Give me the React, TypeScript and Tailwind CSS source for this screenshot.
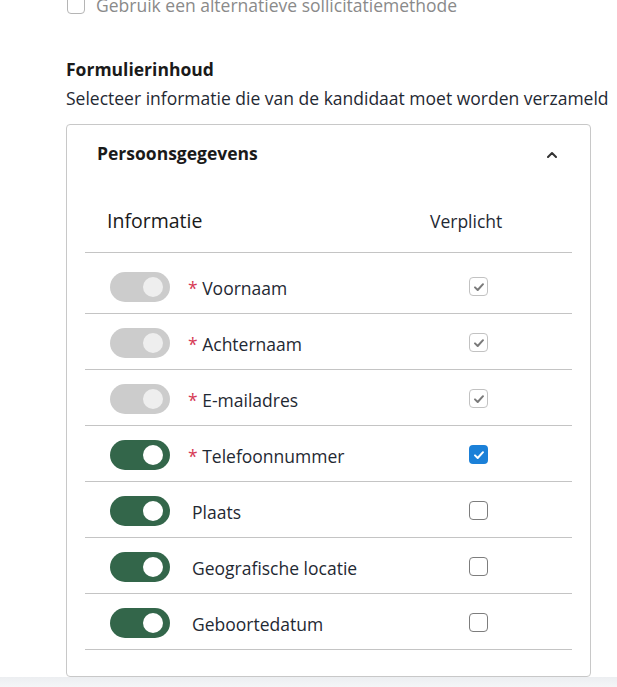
import { useState } from 'react';

type Field = {
  label: string;
  required: boolean;
  locked: boolean;
  enabled: boolean;
  mandatory: boolean;
};

const FIELDS: Field[] = [
  { label: 'Voornaam', required: true, locked: true, enabled: true, mandatory: true },
  { label: 'Achternaam', required: true, locked: true, enabled: true, mandatory: true },
  { label: 'E-mailadres', required: true, locked: true, enabled: true, mandatory: true },
  { label: 'Telefoonnummer', required: true, locked: false, enabled: true, mandatory: true },
  { label: 'Plaats', required: false, locked: false, enabled: true, mandatory: false },
  { label: 'Geografische locatie', required: false, locked: false, enabled: true, mandatory: false },
  { label: 'Geboortedatum', required: false, locked: false, enabled: true, mandatory: false },
];

function CheckMark({ color }: { color: string }) {
  return (
    <svg viewBox="0 0 12 12" className="h-[12px] w-[12px]" fill="none">
      <path d="M2 6.4 4.7 9 10 3.2" stroke={color} strokeWidth="2" strokeLinecap="round" strokeLinejoin="round" />
    </svg>
  );
}

function Toggle({ on, locked }: { on: boolean; locked: boolean }) {
  if (locked) {
    return (
      <div className="flex h-[30px] w-[60px] items-center justify-end rounded-full bg-[#cccccc] pr-[7px]">
        <div className="h-[20px] w-[20px] rounded-full bg-[#eeeeee]" />
      </div>
    );
  }
  return (
    <div
      className={
        on
          ? 'flex h-[30px] w-[60px] items-center justify-end rounded-full bg-[#33664a] pr-[7px]'
          : 'flex h-[30px] w-[60px] items-center justify-start rounded-full bg-[#cccccc] pl-[7px]'
      }
    >
      <div className="h-[20px] w-[20px] rounded-full bg-white" />
    </div>
  );
}

function Checkbox({ checked, locked }: { checked: boolean; locked: boolean }) {
  if (locked) {
    return (
      <div className="flex h-[19px] w-[19px] items-center justify-center rounded-[4px] border border-[#c2c2c2] bg-white">
        <CheckMark color="#7a7a7a" />
      </div>
    );
  }
  if (checked) {
    return (
      <div className="flex h-[19px] w-[19px] items-center justify-center rounded-[4px] bg-[#1b80d8]">
        <CheckMark color="#ffffff" />
      </div>
    );
  }
  return <div className="h-[19px] w-[19px] rounded-[4px] border border-[#7d7d7d] bg-white" />;
}

export default function App() {
  const [fields] = useState(FIELDS);

  return (
    <div
      className="h-[687px] w-[617px] overflow-hidden bg-white text-[#1f2933]"
      style={{ fontFamily: '"Open Sans", "Noto Sans", sans-serif' }}
    >
      {/* Alternative method (scrolled off) */}
      <div className="ml-[67px] mt-[-7px] flex items-center gap-[11px]">
        <div className="h-[18px] w-[18px] rounded-[4px] border border-[#b5b5b5] bg-white" />
        <span className="text-[17.5px] leading-[24px] text-[#8a8a8a]">
          Gebruik een alternatieve sollicitatiemethode
        </span>
      </div>

      {/* Section heading */}
      <div className="ml-[66px] mt-[40px]">
        <h2 className="text-[17.5px] font-bold leading-[24px] text-[#1a1a1a]">Formulierinhoud</h2>
        <p className="mt-[5px] text-[17.5px] leading-[24px] text-[#1f2933]">
          Selecteer informatie die van de kandidaat moet worden verzameld
        </p>
      </div>

      {/* Card */}
      <div className="ml-[66px] mt-[14px] w-[525px] rounded-[4px] border border-[#c8c8c8] pb-[26px]">
        <div className="flex items-center justify-between pl-[30px] pr-[33px] pt-[16px]">
          <h3 className="text-[17.5px] font-bold leading-[24px] text-[#1a1a1a]">Persoonsgegevens</h3>
          <svg viewBox="0 0 10 7" className="mt-[3px] h-[7px] w-[10px]" fill="none">
            <path d="M1 6 5 2l4 4" stroke="#333" strokeWidth="2" strokeLinecap="round" strokeLinejoin="round" />
          </svg>
        </div>

        <div className="mx-[18px] mt-[42px]">
          {/* Table header */}
          <div className="flex items-center border-b border-[#c4c4c4] pb-[17px]">
            <div className="w-[345px] pl-[22px] text-[19.5px] font-medium leading-[28px] text-[#1a1a1a]">
              Informatie
            </div>
            <div className="text-[17.5px] leading-[28px] text-[#1f2933]">Verplicht</div>
          </div>

          {/* Rows */}
          <div className="pt-[5px]">
            {fields.map((f) => (
              <div key={f.label} className="flex h-[56px] items-center border-b border-[#c4c4c4]">
                <div className="pl-[25px] pt-[2px]">
                  <Toggle on={f.enabled} locked={f.locked} />
                </div>
                <div className="ml-[18px] w-[281px] pt-[4px] text-[17.5px] leading-[24px]">
                  {f.required ? (
                    <>
                      <span className="text-[#d63a55]">*</span> {f.label}
                    </>
                  ) : (
                    <span className="ml-[4px]">{f.label}</span>
                  )}
                </div>
                <div className="pt-[2px]">
                  <Checkbox checked={f.mandatory} locked={f.locked} />
                </div>
              </div>
            ))}
          </div>
        </div>
      </div>

      {/* Footer shadow band */}
      <div className="h-[12px] bg-gradient-to-b from-[#eceef1] to-[#f6f7f8]" />
    </div>
  );
}
